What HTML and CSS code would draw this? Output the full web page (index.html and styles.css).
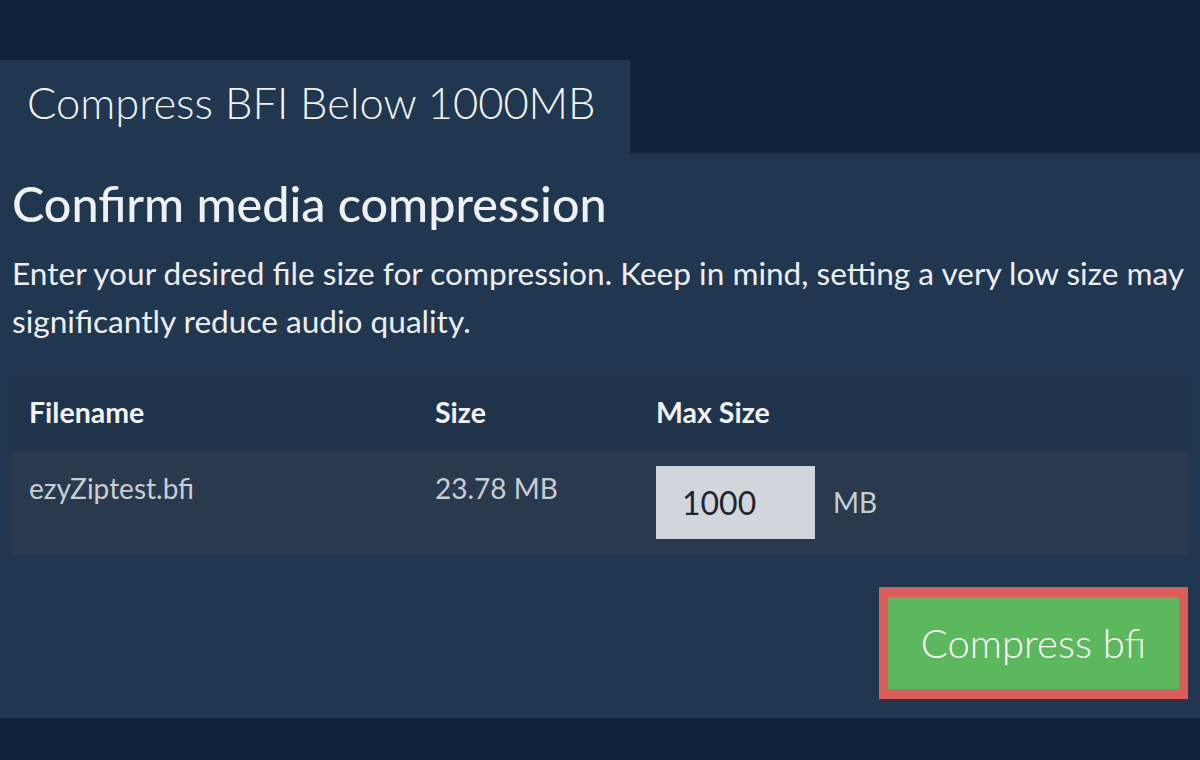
FILE: index.html
```html
<!DOCTYPE html>
<html>
<head>
<meta charset="utf-8">
<link rel="stylesheet" href="styles.css">
</head>
<body>
<div class="page">
  <div class="tabbar">
    <div class="tab">Compress BFI Below 1000MB</div>
  </div>
  <div class="panel">
    <h1 class="title">Confirm media compression</h1>
    <p class="desc">Enter your desired file size for compression. Keep in mind, setting a very low size may significantly reduce audio quality.</p>
    <table class="files">
      <thead>
        <tr>
          <th class="c-name">Filename</th>
          <th class="c-size">Size</th>
          <th class="c-max">Max Size</th>
        </tr>
      </thead>
      <tbody>
        <tr>
          <td class="c-name">ezyZiptest.bfi</td>
          <td class="c-size">23.78 MB</td>
          <td class="c-max">
            <div class="maxwrap">
              <input class="maxinput" type="text" value="1000">
              <span class="unit">MB</span>
            </div>
          </td>
        </tr>
      </tbody>
    </table>
    <div class="actions">
      <button class="compress">Compress bfi</button>
    </div>
  </div>
</div>
</body>
</html>
```
FILE: styles.css
```css
html, body {
  margin: 0;
  padding: 0;
}
body {
  background: #0f233a;
  font-family: Lato, "Open Sans", sans-serif;
  color: #eef0f2;
  width: 1200px;
  height: 760px;
  overflow: hidden;
}
.page {
  padding-top: 60px;
}
.tabbar {
  display: flex;
}
.tab {
  width: 630px;
  height: 93px;
  box-sizing: border-box;
  background: #213750;
  padding-left: 27px;
  font-size: 43.5px;
  font-weight: 300;
  line-height: 84px;
  color: #f1f3f5;
}
.panel {
  background: #213750;
  padding: 10px 12px 19px 12px;
}
.title {
  margin: 0;
  font-size: 48.5px;
  font-weight: 500;
  line-height: 80px;
  color: #eef0f2;
}
.desc {
  margin: 6px 0 0 0;
  font-size: 31.6px;
  line-height: 48px;
  color: #eceef0;
}
.files {
  margin-top: 32px;
  width: 100%;
  border-collapse: collapse;
}
.files th {
  background: #1f344a;
  height: 74px;
  box-sizing: border-box;
  text-align: left;
  font-size: 28.5px;
  font-weight: 700;
  padding: 0 17px 4px 17px;
  color: #f0f2f4;
}
.files td {
  background: #2a3a4e;
  vertical-align: top;
  padding: 15px 17px 16px 17px;
  font-size: 28px;
  line-height: 44px;
  color: #c9ced4;
}
.c-name { width: 372px; }
.c-size { width: 187px; }
.maxwrap {
  display: flex;
  align-items: center;
  gap: 18px;
}
.maxinput {
  width: 159px;
  height: 73px;
  box-sizing: border-box;
  border: none;
  background: #d1d6dc;
  padding: 0 0 0 26px;
  font-family: Lato, sans-serif;
  font-size: 32px;
  color: #1d2530;
  outline: none;
}
.unit {
  font-size: 28px;
  color: #c9ced4;
  margin-bottom: 2px;
}
.actions {
  display: flex;
  justify-content: flex-end;
  margin-top: 32px;
}
.compress {
  width: 309px;
  height: 112px;
  box-sizing: border-box;
  border: 9px solid #dc5e5b;
  border-width: 10px 9px 10px 9px;
  background: #5cb85c;
  color: #ffffff;
  font-family: Lato, sans-serif;
  font-size: 40px;
  font-weight: 300;
  padding: 0;
}
```
